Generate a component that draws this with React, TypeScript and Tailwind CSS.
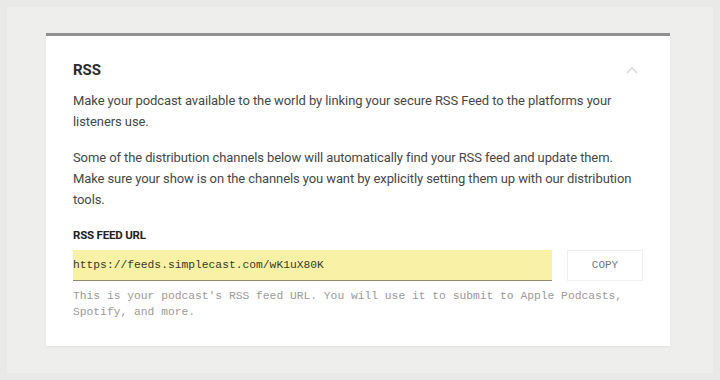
import React from "react";

export default function App() {
  return (
    <div className="w-[720px] h-[380px] bg-[#e9e9e8] p-[7px]" style={{ fontFamily: "Roboto, 'Liberation Sans', sans-serif" }}>
      <div className="w-full h-full bg-[#eeeeed] pt-[26px] pl-[39px]">
        <div className="w-[624px] bg-white border-t-[3px] border-[#8f8f8f] shadow-[0_1px_2px_rgba(0,0,0,0.06)] px-[27px] pt-[24px] pb-[26px]">
          <div className="flex items-center justify-between h-[20px]">
            <h2 className="text-[15px] font-bold text-[#2b2b2b] leading-[20px]">RSS</h2>
            <svg width="14" height="9" viewBox="0 0 14 9" className="mr-[4px]">
              <path d="M2 7 L7 2 L12 7" fill="none" stroke="#dcdcdc" strokeWidth="1.6" />
            </svg>
          </div>
          <p className="mt-[10px] text-[13px] leading-[21px] text-[#474747] tracking-[-0.08px]">
            Make your podcast available to the world by linking your secure RSS Feed to the platforms your listeners use.
          </p>
          <p className="mt-[15px] text-[13px] leading-[21px] text-[#474747] tracking-[-0.1px]">
            Some of the distribution channels below will automatically find your RSS feed and update them. Make sure your show is on the channels you want by explicitly setting them up with our distribution tools.
          </p>
          <div className="mt-[18px] text-[11.5px] leading-[14px] font-bold text-[#222] tracking-[-0.2px]">RSS FEED URL</div>
          <div className="mt-[8px] flex gap-[15px]">
            <div className="w-[479px] h-[31px] bg-[#f8f1a6] border-b border-[#8d8b6a] flex items-center text-[11.3px] text-[#3a3a2a]" style={{ fontFamily: "'Liberation Mono', monospace" }}>
              https://feeds.simplecast.com/wK1uX80K
            </div>
            <button className="w-[76px] h-[31px] border border-[#efefef] bg-white text-[11px] text-[#777]" style={{ fontFamily: "'Liberation Mono', monospace" }}>
              COPY
            </button>
          </div>
          <p className="mt-[7px] text-[11.3px] leading-[16px] text-[#9a9a9a]" style={{ fontFamily: "'Liberation Mono', monospace" }}>
            This is your podcast's RSS feed URL. You will use it to submit to Apple Podcasts, Spotify, and more.
          </p>
        </div>
      </div>
    </div>
  );
}
